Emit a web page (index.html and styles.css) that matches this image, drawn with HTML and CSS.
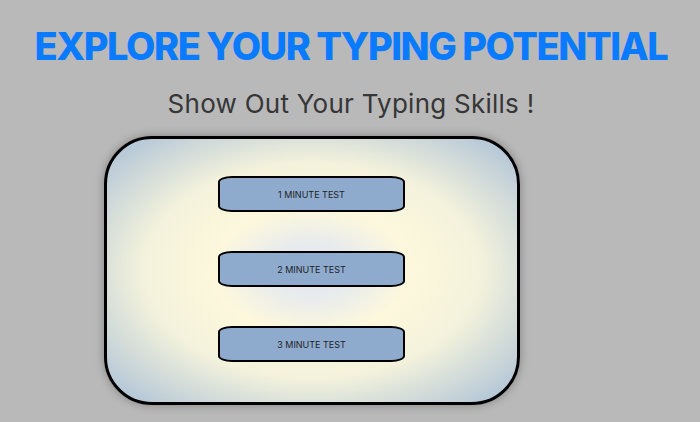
FILE: index.html
```html
<!DOCTYPE html>
<html>
<head>
<meta charset="utf-8">
<link rel="stylesheet" href="styles.css">
</head>
<body>
<header class="hero">
  <h1 class="title">EXPLORE YOUR TYPING POTENTIAL</h1>
  <p class="subtitle">Show Out Your Typing Skills !</p>
</header>
<main class="stage">
  <section class="card">
    <button class="test-btn">1 MINUTE TEST</button>
    <button class="test-btn">2 MINUTE TEST</button>
    <button class="test-btn">3 MINUTE TEST</button>
  </section>
</main>
</body>
</html>
```
FILE: styles.css
```css
html, body {
  margin: 0;
  padding: 0;
}
body {
  background: #b9b9b9;
  font-family: "Inter", "Noto Sans", sans-serif;
  width: 700px;
  height: 422px;
  overflow: hidden;
}
.hero {
  display: flex;
  flex-direction: column;
  align-items: center;
  padding-top: 24px;
  padding-left: 2px;
}
.title {
  margin: 0;
  font-size: 38px;
  line-height: 44px;
  font-weight: 800;
  color: #0a7bff;
  letter-spacing: -1.45px;
}
.subtitle {
  margin: 21px 0 0 0;
  font-size: 26px;
  line-height: 30px;
  font-weight: 400;
  letter-spacing: 0.25px;
  color: #363636;
}
.stage {
  display: flex;
  padding-left: 104px;
  padding-top: 17px;
}
.card {
  box-sizing: border-box;
  width: 416px;
  height: 269px;
  border: 3px solid #000;
  border-radius: 48px;
  background: radial-gradient(ellipse farthest-corner at center, #dfe6f3 0%, #e9ecec 16%, #fdf8dc 34%, #f3f2dc 58%, #a8bed6 100%);
  box-shadow: 0 0 10px rgba(0,0,0,0.3);
  display: flex;
  flex-direction: column;
  align-items: center;
  padding-top: 37px;
  padding-right: 1px;
  gap: 39px;
}
.test-btn {
  box-sizing: border-box;
  width: 187px;
  height: 36px;
  border: 2px solid #000;
  border-radius: 14px / 6px;
  background: #8eabce;
  font-family: "Inter", "Noto Sans", sans-serif;
  font-size: 9px;
  color: #1e1e1e;
  padding: 0;
}
```
